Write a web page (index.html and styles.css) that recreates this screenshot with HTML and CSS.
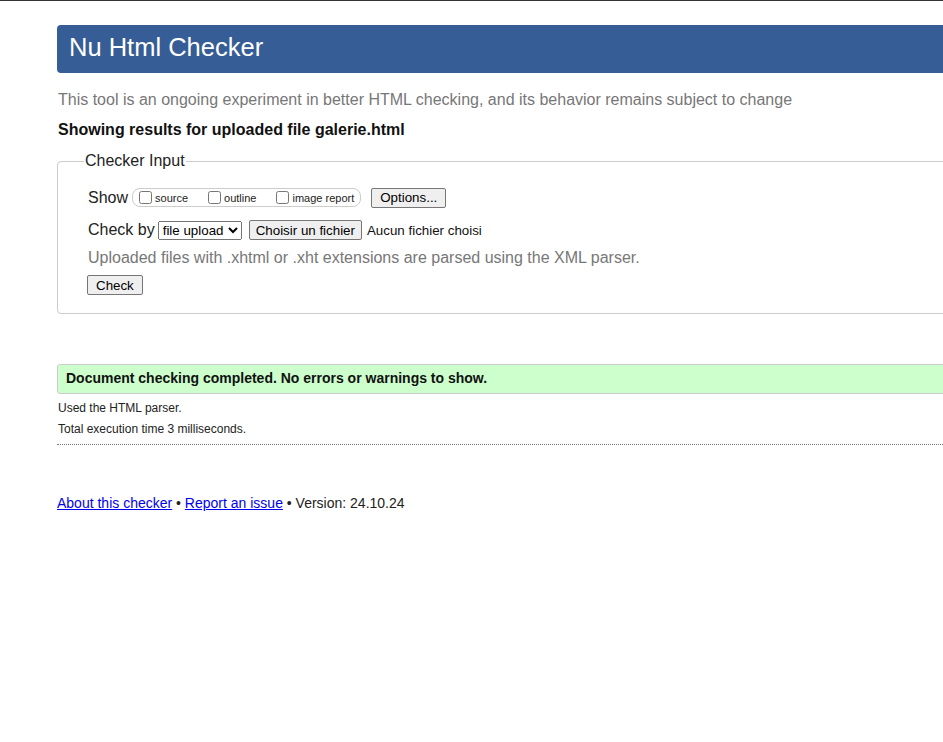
FILE: index.html
```html
<!DOCTYPE html>
<html lang="en">
<head>
<meta charset="utf-8">
<title>Nu Html Checker</title>
<link rel="stylesheet" href="styles.css">
</head>
<body>
<div class="page">
  <h1 class="header">Nu Html Checker</h1>
  <p class="intro">This tool is an ongoing experiment in better HTML checking, and its behavior remains subject to change</p>
  <p class="showing">Showing results for uploaded file galerie.html</p>
  <form class="checker">
    <fieldset class="input-box">
      <legend class="input-legend">Checker Input</legend>
      <div class="row row-show">
        <span class="row-label">Show</span>
        <span class="show-group">
          <label class="opt"><input type="checkbox" class="cb">source</label>
          <label class="opt"><input type="checkbox" class="cb">outline</label>
          <label class="opt"><input type="checkbox" class="cb">image report</label>
        </span>
        <button type="button" class="btn btn-options">Options...</button>
      </div>
      <div class="row row-check">
        <span class="row-label">Check by</span>
        <select class="sel"><option>file upload</option></select>
        <button type="button" class="btn btn-file">Choisir un fichier</button>
        <span class="file-none">Aucun fichier choisi</span>
      </div>
      <p class="note">Uploaded files with .xhtml or .xht extensions are parsed using the XML parser.</p>
      <div class="row row-submit">
        <button type="button" class="btn btn-check">Check</button>
      </div>
    </fieldset>
  </form>
  <p class="success">Document checking completed. No errors or warnings to show.</p>
  <p class="detail first">Used the HTML parser.</p>
  <p class="detail">Total execution time 3 milliseconds.</p>
  <hr class="sep">
  <p class="footer"><a href="#" class="flink">About this checker</a> • <a href="#" class="flink">Report an issue</a> • Version: 24.10.24</p>
</div>
</body>
</html>
```
FILE: styles.css
```css
html {
  border-top: 1px solid #333;
  overflow-x: hidden;
  background: #fff;
}
body {
  margin: 0;
  font-family: "Liberation Sans", Arial, sans-serif;
  color: #222;
  overflow-x: hidden;
}
.page {
  margin-left: 57px;
  margin-right: -40px;
  padding-top: 24px;
}
.header {
  margin: 0;
  height: 48px;
  box-sizing: border-box;
  padding-left: 12px;
  background: #365d95;
  color: #fff;
  font-size: 25.5px;
  font-weight: normal;
  line-height: 45px;
  border-radius: 4px;
}
.intro {
  margin: 18px 0 0 1px;
  font-size: 16px;
  line-height: 18px;
  color: #777;
}
.showing {
  margin: 12px 0 0 1px;
  font-size: 16px;
  line-height: 18px;
  font-weight: bold;
  color: #111;
}
.checker {
  margin: 13px 0 0;
}
.input-box {
  margin: 0;
  padding: 17px 0 18px 30px;
  border: 1px solid #ccc;
  border-radius: 4px;
  min-width: 0;
}
.input-legend {
  margin-left: -4px;
  padding: 0 1px;
  font-size: 16px;
  line-height: 18px;
  color: #222;
}
.row {
  display: flex;
  align-items: center;
}
.row-label {
  font-size: 16px;
  line-height: 18px;
}
.row-show {
  height: 21px;
}
.show-group {
  display: inline-flex;
  align-items: center;
  height: 17px;
  margin-left: 4px;
  padding: 0 6px 0 2px;
  border: 1px solid #ccc;
  border-radius: 8px;
}
.opt {
  display: inline-flex;
  align-items: center;
  font-size: 11px;
  margin-right: 16px;
}
.opt:last-child {
  margin-right: 0;
}
.cb {
  width: 13px;
  height: 13px;
  margin: 0 3px 0 4px;
}
.btn {
  font-family: "Liberation Sans", Arial, sans-serif;
  font-size: 13.333px;
  color: #000;
  background: #efefef;
  border: 1px solid #767676;
  border-radius: 2px;
  padding: 1px 7px;
  height: 20px;
  line-height: 15px;
  white-space: nowrap;
}
.btn-options {
  margin-left: 10px;
  padding: 1px 8px;
}
.row-check {
  margin-top: 12px;
  height: 20px;
}
.sel {
  margin-left: 3px;
  font-family: "Liberation Sans", Arial, sans-serif;
  font-size: 13.333px;
  width: 84px;
  height: 19px;
  color: #000;
}
.btn-file {
  margin-left: 7px;
  padding: 1px 6px;
}
.file-none {
  margin-left: 5px;
  font-size: 13.333px;
  color: #111;
}
.note {
  margin: 9px 0 0;
  font-size: 16px;
  line-height: 18px;
  color: #777;
}
.row-submit {
  margin-top: 8px;
}
.btn-check {
  padding: 1px 8px;
  margin-left: -1px;
}
.success {
  margin: 50px 0 0;
  padding: 6px 8px 7px;
  font-size: 14px;
  line-height: 15px;
  font-weight: bold;
  color: #111;
  background: #ccffcc;
  border: 1px solid #ccc;
  border-radius: 3px;
}
.detail {
  margin: 7px 0 0 1px;
  font-size: 12px;
  line-height: 14px;
  color: #222;
}
.sep {
  margin: 8px 0 0;
  height: 0;
  border: 0;
  border-top: 1px dotted #777;
}
.footer {
  margin: 50px 0 0;
  font-size: 14px;
  line-height: 16px;
  color: #222;
}
.flink {
  color: #0000ee;
}
```
